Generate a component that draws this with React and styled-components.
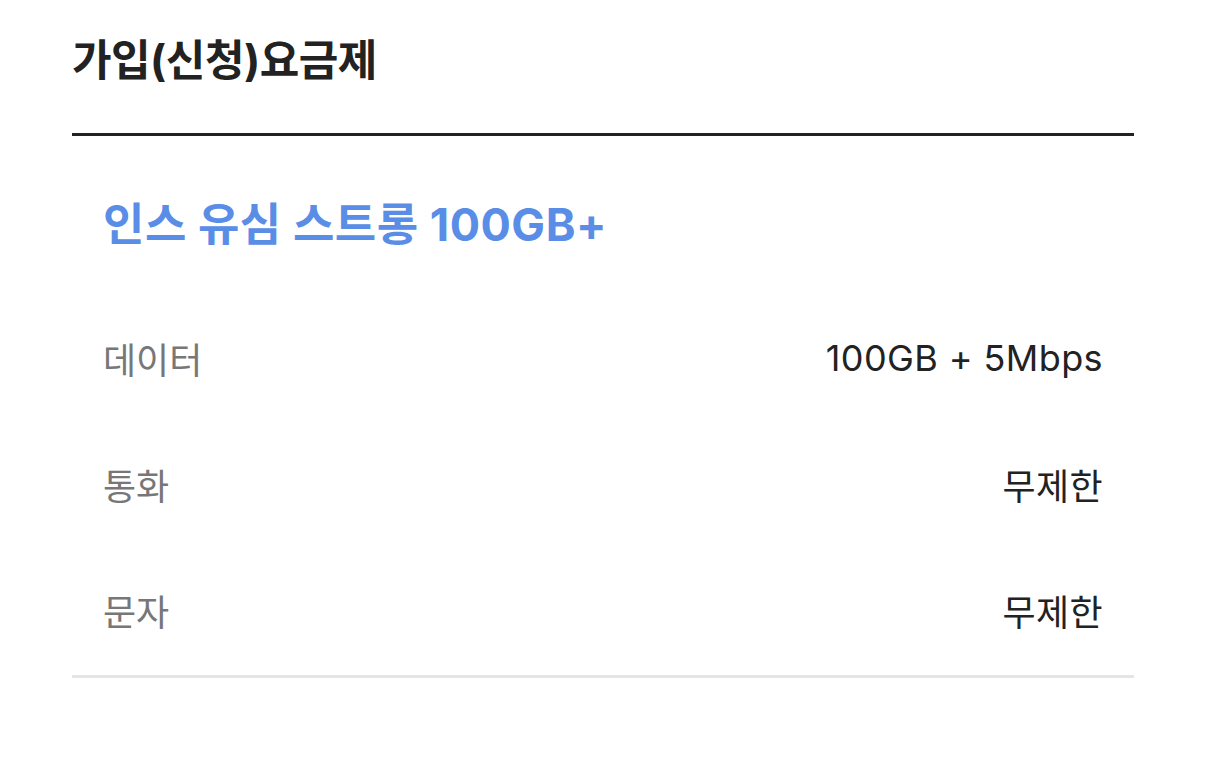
import React from "react";
import styled, { createGlobalStyle } from "styled-components";

const GlobalStyle = createGlobalStyle`
  body {
    margin: 0;
    background: #fff;
    font-family: "Inter", "Noto Sans CJK KR", "Noto Sans", sans-serif;
  }
`;

const Page = styled.div`
  padding: 0 72px;
  width: 1062px;
`;

const Header = styled.div`
  padding: 30px 0 43px;
  border-bottom: 3px solid #222;
`;

const Title = styled.h2`
  margin: 0;
  font-size: 43px;
  line-height: 60px;
  font-weight: 700;
  color: #222;
  letter-spacing: -0.5px;
`;

const Plan = styled.div`
  padding: 59px 31px 2px;
  border-bottom: 3px solid #e5e5e5;
`;

const PlanName = styled.div`
  font-size: 45px;
  line-height: 60px;
  font-weight: 700;
  color: #5a8ee6;
  letter-spacing: 0.5px;
  margin-bottom: 40px;
`;

const Row = styled.div`
  display: flex;
  justify-content: space-between;
  align-items: center;
  height: 126px;
  font-size: 36px;
`;

const Label = styled.span`
  color: #777;
`;

const Value = styled.span`
  color: #222;
  letter-spacing: 0.4px;
`;

const specs = [
  { label: "데이터", value: "100GB + 5Mbps" },
  { label: "통화", value: "무제한" },
  { label: "문자", value: "무제한" },
];

export default function App() {
  return (
    <>
      <GlobalStyle />
      <Page>
        <Header>
          <Title>가입(신청)요금제</Title>
        </Header>
        <Plan>
          <PlanName>인스 유심 스트롱 100GB+</PlanName>
          {specs.map((s) => (
            <Row key={s.label}>
              <Label>{s.label}</Label>
              <Value>{s.value}</Value>
            </Row>
          ))}
        </Plan>
      </Page>
    </>
  );
}
